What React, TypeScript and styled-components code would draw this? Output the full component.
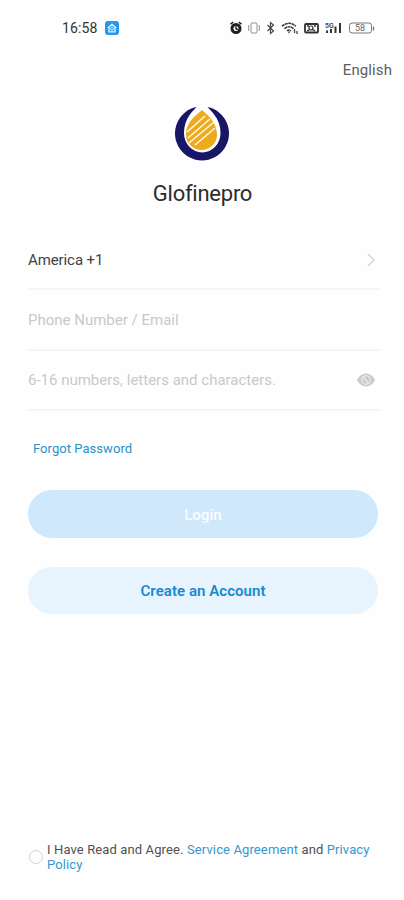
import React from "react";
import styled, { createGlobalStyle } from "styled-components";

const GlobalStyle = createGlobalStyle`
  * { box-sizing: border-box; }
  body { margin: 0; background: #fefefe; font-family: Roboto, "Liberation Sans", sans-serif; }
  button { font-family: inherit; border: 0; padding: 0; background: none; }
`;

const Screen = styled.main`
  width: 404px;
  height: 900px;
  display: flex;
  flex-direction: column;
  overflow: hidden;
  background: #fefefe;
`;

const StatusBar = styled.header`
  height: 56px;
  padding: 0 29px 0 62px;
  display: flex;
  align-items: center;
`;

const Clock = styled.span`
  font-size: 14px;
  line-height: 16px;
  letter-spacing: 0.1px;
  color: #333;
  margin-right: 8px;
`;

const StatusIcons = styled.svg`
  margin-left: auto;
  display: block;
`;

const LanguageRow = styled.div`
  height: 28px;
  padding-right: 12px;
  display: flex;
  justify-content: flex-end;
  align-items: center;
`;

const Language = styled.button`
  font-size: 15px;
  line-height: 20px;
  letter-spacing: 0.1px;
  color: #606060;
`;

const Brand = styled.section`
  height: 146px;
  padding-top: 20px;
  display: flex;
  flex-direction: column;
  align-items: center;
`;

const AppName = styled.h1`
  margin: 18px 0 0 1px;
  font-size: 22px;
  line-height: 28px;
  font-weight: 400;
  letter-spacing: -0.25px;
  color: #2c2c2c;
`;

const Form = styled.form`
  padding: 0 26px 0 28px;
  display: flex;
  flex-direction: column;
`;

const Field = styled.div<{ $filled?: boolean }>`
  height: 60.3px;
  padding-top: 1px;
  display: flex;
  align-items: center;
  justify-content: space-between;
  border-bottom: 2px solid #f5f5f5;
  margin-right: -2px;
  font-size: 15px;
  letter-spacing: ${(p) => (p.$filled ? -0.1 : 0)}px;
  color: ${(p) => (p.$filled ? "#424242" : "#c9c9c9")};
`;

const Forgot = styled.button`
  align-self: flex-start;
  margin: 28px 0 0 5px;
  font-size: 13px;
  line-height: 20px;
  letter-spacing: 0.05px;
  color: #2c8fc9;
`;

const Action = styled.button<{ $primary?: boolean }>`
  height: ${(p) => (p.$primary ? 48 : 47)}px;
  margin-top: ${(p) => (p.$primary ? 31 : 29)}px;
  padding-top: 2px;
  border-radius: 24px;
  background: ${(p) => (p.$primary ? "#cfe8fc" : "#e7f3fd")};
  color: ${(p) => (p.$primary ? "#fafdff" : "#1689d1")};
  font-size: 15px;
  font-weight: ${(p) => (p.$primary ? 500 : 600)};
  letter-spacing: 0.05px;
`;

const Agreement = styled.footer`
  margin-top: auto;
  padding: 0 28px 28px 29px;
  display: flex;
  align-items: center;
  gap: 4px;
`;

const Radio = styled.span`
  flex: none;
  width: 14px;
  height: 14px;
  border: 1px solid #d4d4d4;
  border-radius: 50%;
`;

const AgreementText = styled.p`
  margin: 0;
  font-size: 13px;
  line-height: 15px;
  letter-spacing: 0.12px;
  white-space: nowrap;
  color: #505050;
`;

const Link = styled.a`
  color: #3597d0;
`;

const HomeBadge = () => (
  <svg width="14" height="14" viewBox="0 0 14 14">
    <rect width="14" height="14" rx="3" fill="#2699ef" />
    <path d="M2.8 7 7 3.2 11.2 7M4 6.4v4.4h6V6.4" fill="none" stroke="#e5f5ff" strokeWidth="1.3" strokeLinejoin="round" />
    <circle cx="7" cy="7.8" r="1.4" fill="none" stroke="#e5f5ff" strokeWidth="0.9" />
  </svg>
);

const DeviceStatus = () => (
  <StatusIcons width="146" height="16" viewBox="0 0 146 16" fill="none">
    <circle cx="7" cy="8.5" r="4" stroke="#202020" strokeWidth="3" />
    <path d="m1.5 4.2 2.7-2M12.5 4.2l-2.7-2M7 6.2v2.5l2 1" stroke="#202020" strokeWidth="1.5" />
    <rect x="22" y="3" width="6" height="10" rx="1" stroke="#909090" />
    <path d="M19.7 5v6M30.3 5v6" stroke="#909090" />
    <path d="m38.5 5 6 6-3 2.5v-11l3 2.5-6 6" stroke="#484848" strokeWidth="1.2" />
    <path d="M53 6.3q7-6 14 0M55.5 8.7q4.5-4 9 0M58 11q2-1.8 4 0" stroke="#383838" strokeWidth="1.5" strokeDasharray="3 .5" />
    <path d="M60 11.2v2M65.5 9v4M68 11v3" stroke="#444" strokeWidth="1.3" />
    <rect x="76" y="4" width="13" height="8.5" rx="1" stroke="#303030" strokeWidth="1.8" />
    <circle cx="82" cy="8" r="2" stroke="#303030" strokeWidth="1.2" />
    <path d="m83 9 3 2M78 6h2M78 10.5h2M85 6h2" stroke="#303030" strokeWidth="1.3" />
    <text x="96" y="7.5" fontFamily="Roboto" fontSize="7" fontWeight="600" fill="#444">5G</text>
    <path d="M98 10.5V13M102 9v4M106.5 6.5V13M111 3v10" stroke="#333" strokeWidth="2" />
    <rect x="120.5" y="3" width="22" height="10" rx="2.5" stroke="#777" />
    <path d="M144.5 6.5v4" stroke="#777" strokeWidth="1.3" />
    <text x="126" y="11.2" fontFamily="Roboto" fontSize="9" fill="#666">58</text>
  </StatusIcons>
);

const Logo = () => (
  <svg width="56" height="58" viewBox="0 0 56 58">
    <path d="M22.5 3A27 27 0 1 0 33.5 3L39 9Q46.5 18 46.5 29A18.2 19.5 0 0 1 10 29Q10 18 17 9Z" fill="#171766" />
    <path d="M28 6C24 10 12 17 12 31C12 39 19 46 27.5 46S43 39 43 31C43 17 32 10 28 6Z" fill="#edaa1c" />
    <path d="m13 28 18-16M14 34l22-19M15 39l25-21M21 41l20-17" stroke="#fff8e6" strokeWidth="1.6" />
  </svg>
);

const Chevron = () => (
  <svg width="10" height="16" viewBox="0 0 10 16">
    <path d="m2 2 6 6-6 6" fill="none" stroke="#d2d2d2" strokeWidth="1.3" />
  </svg>
);

const HiddenEye = () => (
  <svg width="20" height="16" viewBox="0 0 20 16">
    <path d="M.8 8Q4.5 1.5 10 1.5T19.2 8Q15.5 14.5 10 14.5T.8 8Z" fill="#cbcbcb" />
    <circle cx="10" cy="8" r="4.3" fill="none" stroke="#eee" strokeWidth="1.1" />
    <path d="m7 4.5 5.5 7" stroke="#f4f4f4" strokeWidth="1.2" />
  </svg>
);

const FieldIcon = styled.span`
  display: flex;
  margin-right: 4px;
`;

export default function App() {
  return (
    <>
      <GlobalStyle />
      <Screen>
        <StatusBar>
          <Clock>16:58</Clock>
          <HomeBadge />
          <DeviceStatus />
        </StatusBar>
        <LanguageRow>
          <Language>English</Language>
        </LanguageRow>
        <Brand>
          <Logo />
          <AppName>Glofinepro</AppName>
        </Brand>
        <Form>
          <Field $filled>
            <span>America +1</span>
            <FieldIcon><Chevron /></FieldIcon>
          </Field>
          <Field>
            <span>Phone Number / Email</span>
          </Field>
          <Field>
            <span>6-16 numbers, letters and characters.</span>
            <FieldIcon><HiddenEye /></FieldIcon>
          </Field>
          <Forgot type="button">Forgot Password</Forgot>
          <Action type="button" $primary>Login</Action>
          <Action type="button">Create an Account</Action>
        </Form>
        <Agreement>
          <Radio />
          <AgreementText>
            I Have Read and Agree. <Link>Service Agreement</Link> and <Link>Privacy<br />Policy</Link>
          </AgreementText>
        </Agreement>
      </Screen>
    </>
  );
}
